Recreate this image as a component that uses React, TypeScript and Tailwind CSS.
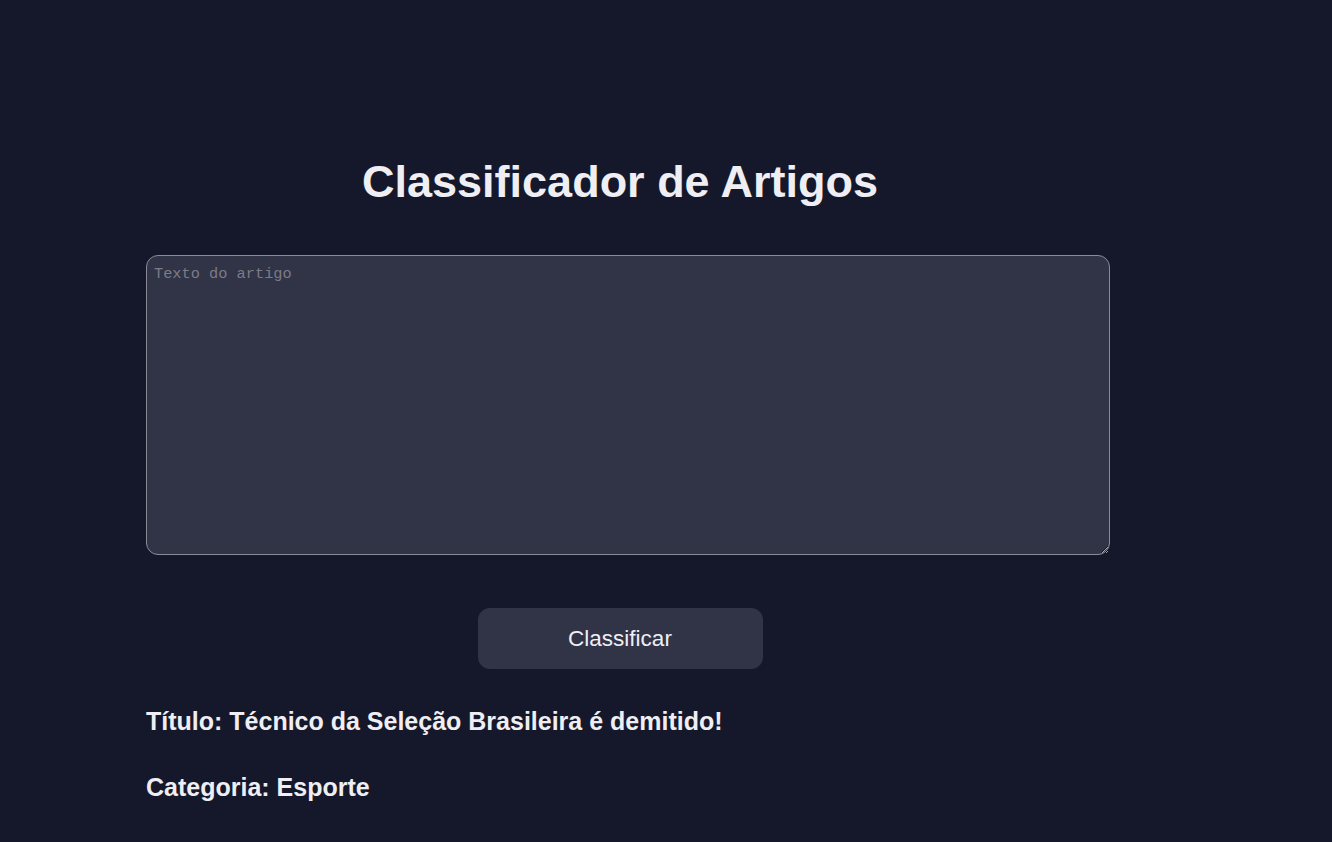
export default function App() {
  return (
    <div className="min-h-[842px] w-full bg-[#15182b] font-['Liberation_Sans',Arial,sans-serif] text-[#eeeef3]">
      <div className="ml-[146px] w-[948px] pt-[155px]">
        <h1 className="text-center text-[45px] font-bold leading-[54px]">Classificador de Artigos</h1>

        <textarea
          placeholder="Texto do artigo"
          className="mt-[46px] box-content block h-[284px] w-full resize-y rounded-[12px] border border-[#8a8b99] bg-[#313347] px-[7px] pt-[8px] pb-[6px] font-['Liberation_Mono',monospace] text-[15.3px] leading-[20px] text-[#eeeef3] outline-none placeholder:text-[#7b7c86]"
        />

        <div className="mt-[53px] flex justify-center">
          <button className="h-[61px] w-[285px] rounded-[12px] bg-[#313347] text-[22.5px] text-[#eeeef3]">
            Classificar
          </button>
        </div>

        <div className="mt-[38px] text-[25px] font-bold leading-[29px]">
          <p>Título: Técnico da Seleção Brasileira é demitido!</p>
          <p className="mt-[37px]">Categoria: Esporte</p>
        </div>
      </div>
    </div>
  );
}
